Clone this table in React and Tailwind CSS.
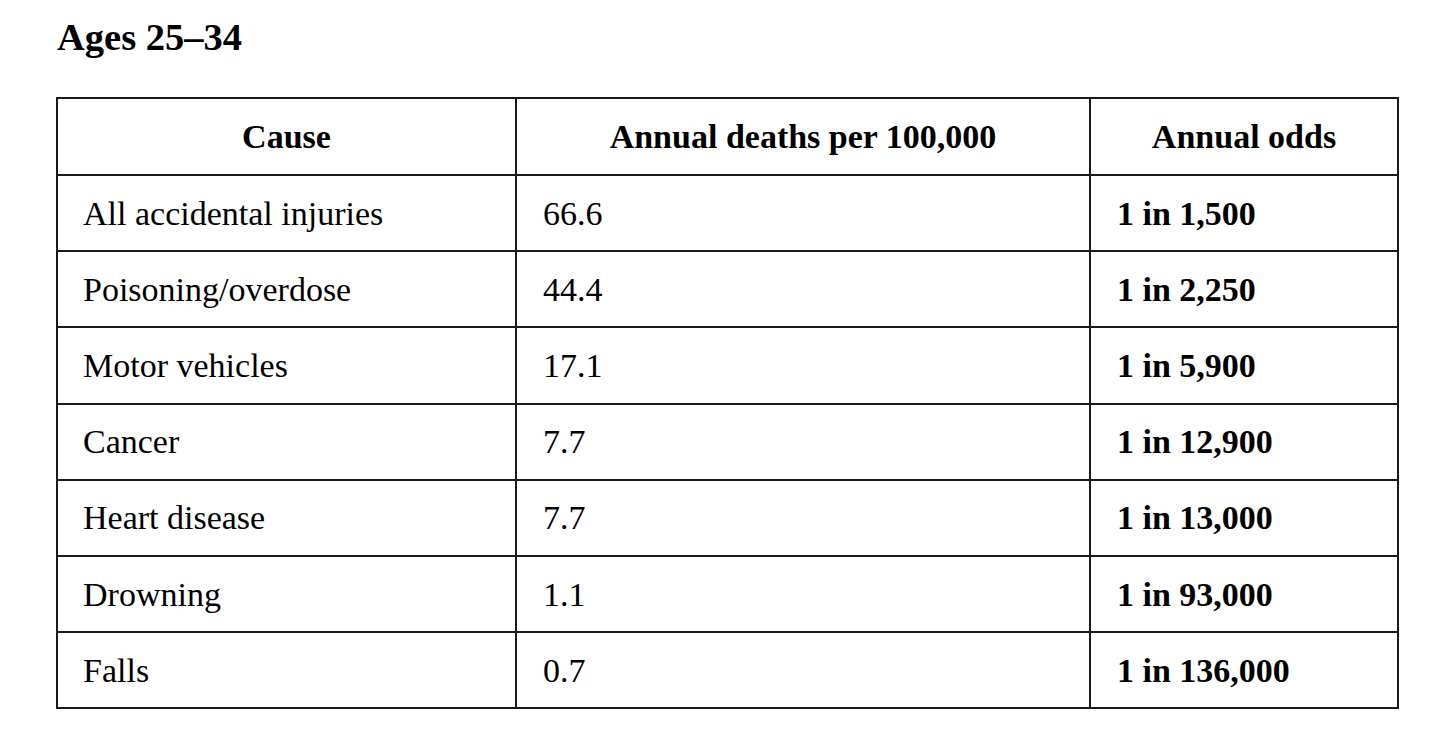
const rows = [
  ['All accidental injuries', '66.6', '1 in 1,500'],
  ['Poisoning/overdose', '44.4', '1 in 2,250'],
  ['Motor vehicles', '17.1', '1 in 5,900'],
  ['Cancer', '7.7', '1 in 12,900'],
  ['Heart disease', '7.7', '1 in 13,000'],
  ['Drowning', '1.1', '1 in 93,000'],
  ['Falls', '0.7', '1 in 136,000'],
]

export default function App() {
  return (
    <div className="min-h-screen bg-white text-black font-['Liberation_Serif','Times_New_Roman',serif] pl-[56px] pt-[18px]">
      <h2 className="pl-px text-[38.5px] leading-[38px] font-bold">Ages 25–34</h2>

      <table className="mt-[41px] w-[1341px] table-fixed border-collapse text-[34px]">
        <colgroup>
          <col className="w-[459px]" />
          <col className="w-[574px]" />
          <col className="w-[308px]" />
        </colgroup>
        <thead>
          <tr className="h-[77px]">
            <th className="border-2 border-[#1a1a1a] font-bold text-center">Cause</th>
            <th className="border-2 border-[#1a1a1a] font-bold text-center">Annual deaths per 100,000</th>
            <th className="border-2 border-[#1a1a1a] font-bold text-center">Annual odds</th>
          </tr>
        </thead>
        <tbody>
          {rows.map((r, i) => (
            <tr key={i} className="h-[76.2px]">
              <td className="border-2 border-[#1a1a1a] pl-[25px]">{r[0]}</td>
              <td className="border-2 border-[#1a1a1a] pl-[26px]">{r[1]}</td>
              <td className="border-2 border-[#1a1a1a] pl-[26px] font-bold">{r[2]}</td>
            </tr>
          ))}
        </tbody>
      </table>
    </div>
  )
}
